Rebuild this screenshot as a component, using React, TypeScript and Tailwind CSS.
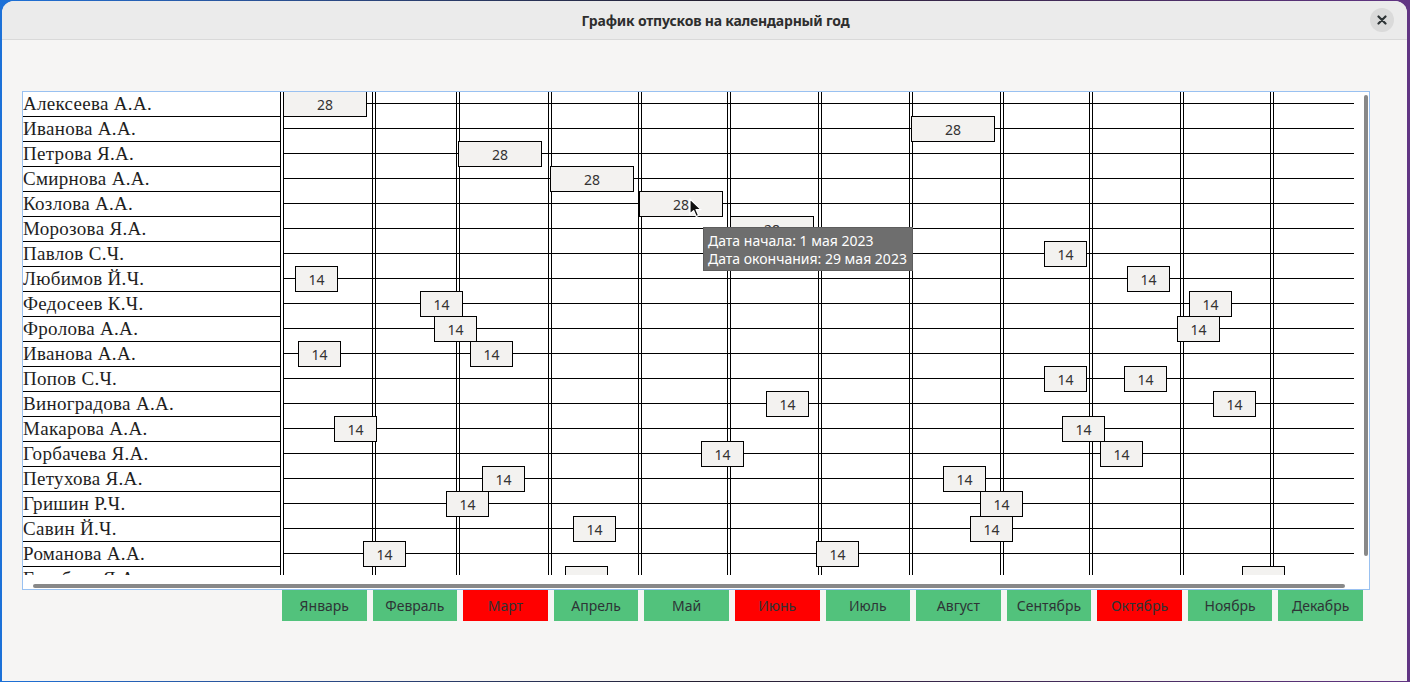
import React from "react";

type Vacation = { x: number; w: number; days: number };

const NAMES = [
  "Алексеева А.А.",
  "Иванова А.А.",
  "Петрова Я.А.",
  "Смирнова А.А.",
  "Козлова А.А.",
  "Морозова Я.А.",
  "Павлов С.Ч.",
  "Любимов Й.Ч.",
  "Федосеев К.Ч.",
  "Фролова А.А.",
  "Иванова А.А.",
  "Попов С.Ч.",
  "Виноградова А.А.",
  "Макарова А.А.",
  "Горбачева Я.А.",
  "Петухова Я.А.",
  "Гришин Р.Ч.",
  "Савин Й.Ч.",
  "Романова А.А.",
  "Голубева Я.А.",
];

// screen x of each box, converted to grid offset below (grid starts at x=280)
const V = (x: number, days: number, w?: number): Vacation => ({ x: x - 280, days, w: w ?? (days === 28 ? 84 : 43) });

const VACATIONS: Vacation[][] = [
  [V(283, 28)],
  [V(911, 28)],
  [V(458, 28)],
  [V(550, 28)],
  [V(639, 28)],
  [V(730, 28)],
  [V(1044, 14)],
  [V(295, 14), V(1127, 14)],
  [V(420, 14), V(1189, 14)],
  [V(434, 14), V(1177, 14)],
  [V(298, 14), V(470, 14)],
  [V(1044, 14), V(1124, 14)],
  [V(766, 14), V(1213, 14)],
  [V(334, 14), V(1062, 14)],
  [V(701, 14), V(1100, 14)],
  [V(482, 14), V(943, 14)],
  [V(446, 14), V(980, 14)],
  [V(573, 14), V(970, 14)],
  [V(363, 14), V(816, 14)],
  [V(565, 14), V(1242, 14)],
];

// month boundaries, offset from the grid start
const MONTH_LINES = [0, 92, 176, 268, 358, 447, 538, 629, 720, 809, 900, 990];

const MONTHS = [
  { name: "Январь", busy: false },
  { name: "Февраль", busy: false },
  { name: "Март", busy: true },
  { name: "Апрель", busy: false },
  { name: "Май", busy: false },
  { name: "Июнь", busy: true },
  { name: "Июль", busy: false },
  { name: "Август", busy: false },
  { name: "Сентябрь", busy: false },
  { name: "Октябрь", busy: true },
  { name: "Ноябрь", busy: false },
  { name: "Декабрь", busy: false },
];

const sans = "font-['Noto_Sans','Liberation_Sans',sans-serif]";

export default function App() {
  return (
    <div className="w-[1410px] h-[682px] overflow-hidden bg-gradient-to-r from-[#1c71d8] via-[#241f31] to-[#613583] pt-[1px] pl-[2px]">
      <div className={`w-[1405px] h-[680px] rounded-t-[12px] overflow-hidden bg-[#f6f5f4] flex flex-col ${sans}`}>
        {/* title bar */}
        <header className="relative h-[39px] shrink-0 bg-[#ebebeb] border-b border-[#d9d9d9] flex items-center justify-center pl-[22px]">
          <span className="text-[14px] font-bold tracking-[-0.2px] text-[#2e2e2e]">График отпусков на календарный год</span>
          <button className="absolute right-[13px] top-[7px] w-[24px] h-[24px] rounded-full bg-[#dadada] flex items-center justify-center" aria-label="Закрыть">
            <svg width="10" height="10" viewBox="0 0 10 10">
              <path d="M1.5 1.5 L8.5 8.5 M8.5 1.5 L1.5 8.5" stroke="#2e3436" strokeWidth="2.2" strokeLinecap="round" />
            </svg>
          </button>
        </header>

        <main className="pt-[51px] pl-[20px]">
          <div className="relative w-[1348px] h-[499px] border border-[#99c1f1] bg-white overflow-hidden">
            <div className="flex h-[483px] overflow-hidden">
              {/* names */}
              <div className="w-[257px] shrink-0 flex flex-col">
                {NAMES.map((n, i) => (
                  <div
                    key={i}
                    className="h-[25px] shrink-0 border-b border-black font-['Liberation_Serif','Times_New_Roman',serif] text-[19px] tracking-[0.3px] leading-[23px] text-[#1e1e1e] whitespace-nowrap"
                  >
                    {n}
                  </div>
                ))}
              </div>

              {/* timeline */}
              <div className="relative w-[1083px] shrink-0">
                {MONTH_LINES.map((x) => (
                  <div key={x} className="absolute top-0 bottom-0 w-[4px] border-x border-black" style={{ left: x }} />
                ))}
                <div className="flex flex-col">
                  {VACATIONS.map((row, i) => (
                    <div key={i} className="relative h-[25px] shrink-0">
                      <div className="absolute left-[3px] top-[11px] w-[1071px] h-px bg-black" />
                      {row.map((v, j) => (
                        <div
                          key={j}
                          className="absolute top-[-1px] h-[26px] border border-black bg-[#f3f2f0] flex items-center justify-center text-[14px] text-[#333]"
                          style={{ left: v.x, width: v.w }}
                        >
                          {v.days}
                        </div>
                      ))}
                    </div>
                  ))}
                </div>
              </div>
            </div>

            {/* scrollbars */}
            <div className="absolute left-[10px] top-[492px] w-[1312px] h-[4px] rounded-full bg-[#888]" />
            <div className="absolute left-[1341px] top-[3px] w-[4px] h-[461px] rounded-full bg-[#888]" />

            {/* tooltip */}
            <div className="absolute left-[680px] top-[135px] w-[210px] h-[44px] bg-[#6e6e6e] border border-[#5e5e5e] px-[4px] pt-[4px] text-[14px] leading-[18px] text-white whitespace-nowrap">
              <div>Дата начала: 1 мая 2023</div>
              <div>Дата окончания: 29 мая 2023</div>
            </div>

            {/* mouse pointer */}
            <svg className="absolute left-[666px] top-[106px]" width="14" height="20" viewBox="0 0 14 20">
              <path d="M1 1 L1 16 L4.6 12.6 L7.2 18.5 L9.6 17.4 L7 11.6 L12 11.6 Z" fill="#111" stroke="#fff" strokeWidth="1.2" strokeLinejoin="round" />
            </svg>
          </div>

          {/* months */}
          <div className="ml-[260px] w-[1081px] grid grid-cols-12 gap-[6px]">
            {MONTHS.map((m) => (
              <div
                key={m.name}
                className={`h-[31px] flex items-center justify-center text-[14px] text-[#2e3436] ${m.busy ? "bg-[#ff0000]" : "bg-[#52c27c]"}`}
              >
                {m.name}
              </div>
            ))}
          </div>
        </main>
      </div>
    </div>
  );
}
